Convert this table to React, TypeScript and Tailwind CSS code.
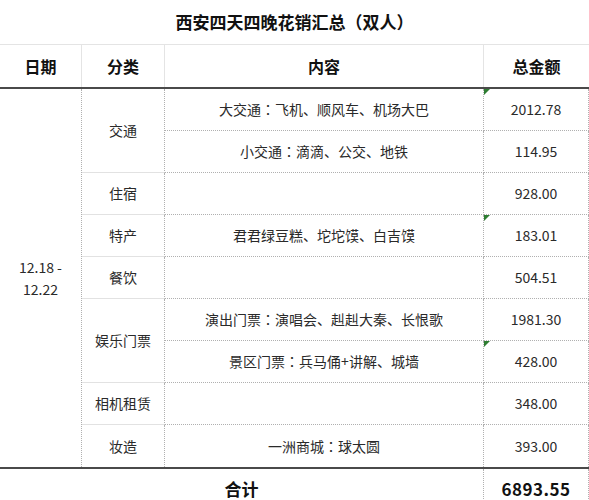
import React from 'react';

interface Row {
  content: string;
  amount: string;
  mark?: boolean;
}

const rows: Row[] = [
  { content: '大交通：飞机、顺风车、机场大巴', amount: '2012.78', mark: true },
  { content: '小交通：滴滴、公交、地铁', amount: '114.95' },
  { content: '', amount: '928.00' },
  { content: '君君绿豆糕、坨坨馍、白吉馍', amount: '183.01', mark: true },
  { content: '', amount: '504.51' },
  { content: '演出门票：演唱会、赳赳大秦、长恨歌', amount: '1981.30' },
  { content: '景区门票：兵马俑+讲解、城墙', amount: '428.00', mark: true },
  { content: '', amount: '348.00' },
  { content: '一洲商城：球太圆', amount: '393.00' },
];

// category cells, with how many body rows each one covers
const categories = [
  { name: '交通', span: 'row-span-2' },
  { name: '住宿', span: '' },
  { name: '特产', span: '' },
  { name: '餐饮', span: '' },
  { name: '娱乐门票', span: 'row-span-2' },
  { name: '相机租赁', span: '' },
  { name: '妆造', span: '' },
];

function Mark() {
  return (
    <svg className="absolute left-0 top-0" width="6" height="6" viewBox="0 0 6 6">
      <polygon points="0,0 6,0 0,6" fill="#2e7d32" />
    </svg>
  );
}

// the full-width colon sits centred in the reference, so take it from the TC face
function Content({ text }: { text: string }) {
  const idx = text.indexOf('：');
  if (idx < 0) return <>{text}</>;
  return (
    <>
      {text.slice(0, idx)}
      <span className="font-['Noto_Sans_CJK_TC',sans-serif]">：</span>
      {text.slice(idx + 1)}
    </>
  );
}

export default function App() {
  return (
    <div className="w-[589px] h-[500px] overflow-hidden bg-white text-[#222] font-['Noto_Sans_CJK_SC','Noto_Sans',sans-serif]">
      {/* Title */}
      <div className="h-[45px] flex items-center justify-center border-b border-[#e4e4e4] text-[17px] font-bold text-[#111]">
        西安四天四晚花销汇总（双人）
      </div>

      {/* Header */}
      <div className="grid grid-cols-[82px_83px_319px_105px] h-[42px] text-[16px] font-bold text-[#111]">
        <div className="flex items-center justify-center border-r border-[#e4e4e4]">日期</div>
        <div className="flex items-center justify-center border-r border-[#e4e4e4]">分类</div>
        <div className="flex items-center justify-center border-r border-[#e4e4e4]">内容</div>
        <div className="flex items-center justify-center">总金额</div>
      </div>
      <div className="h-[2px] bg-[#4a4a4a]" />

      {/* Body */}
      <div className="grid grid-cols-[82px_83px_319px_105px] grid-rows-[repeat(9,42px)] grid-flow-col text-[14px] text-[#2a2a2a]">
        <div className="row-span-9 flex flex-col items-center justify-center leading-[22px] border-r border-dotted border-[#b0b0b0]">
          <span>12.18 -</span>
          <span>12.22</span>
        </div>
        {categories.map((c, i) => (
          <div
            key={c.name}
            className={`${c.span} flex items-center justify-center border-r border-dotted border-r-[#b0b0b0] ${
              i < categories.length - 1 ? 'border-b border-b-[#e2e2e2] [border-bottom-style:solid]' : ''
            }`}
          >
            {c.name}
          </div>
        ))}
        {rows.map((r, i) => (
          <div
            key={'c' + i}
            className={`flex items-center justify-center border-r border-dotted border-[#b0b0b0] ${
              i < rows.length - 1 ? 'border-b' : ''
            }`}
          >
            <Content text={r.content} />
          </div>
        ))}
        {rows.map((r, i) => (
          <div
            key={'a' + i}
            className={`relative flex items-center justify-center border-r border-dotted border-[#b0b0b0] ${
              i < rows.length - 1 ? 'border-b' : ''
            }`}
          >
            {r.mark && <Mark />}
            {r.amount}
          </div>
        ))}
      </div>
      <div className="h-[2px] bg-[#4a4a4a]" />

      {/* Total */}
      <div className="grid grid-cols-[484px_105px] h-[40px] text-[17px] font-bold text-[#111]">
        <div className="flex items-center justify-center border-r border-dotted border-[#b0b0b0]">合计</div>
        <div className="flex items-center justify-center border-r border-dotted border-[#b0b0b0] tracking-[0.5px]">
          6893.55
        </div>
      </div>
    </div>
  );
}
